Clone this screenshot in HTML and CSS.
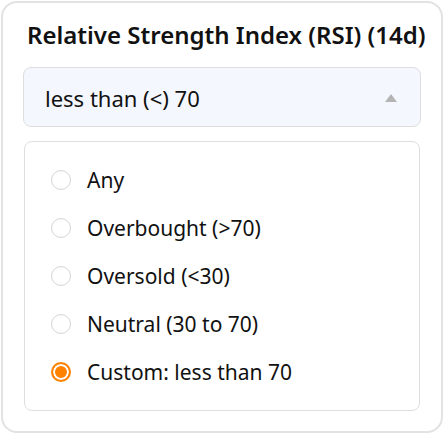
FILE: index.html
```html
<!DOCTYPE html>
<html>
<head>
<meta charset="utf-8">
<link rel="stylesheet" href="styles.css">
</head>
<body>
<div class="card">
  <div class="title">Relative Strength Index (RSI) (14d)</div>
  <div class="select">
    <span class="select-value">less than (&lt;) 70</span>
    <span class="caret"></span>
  </div>
  <div class="options">
    <div class="option"><span class="radio"></span><span class="label">Any</span></div>
    <div class="option"><span class="radio"></span><span class="label">Overbought (&gt;70)</span></div>
    <div class="option"><span class="radio"></span><span class="label">Oversold (&lt;30)</span></div>
    <div class="option"><span class="radio"></span><span class="label">Neutral (30 to 70)</span></div>
    <div class="option"><span class="radio checked"></span><span class="label">Custom: less than 70</span></div>
  </div>
</div>
</body>
</html>
```
FILE: styles.css
```css
html, body {
  margin: 0;
  padding: 0;
  background: #ffffff;
}
body {
  padding: 1px;
  font-family: "Noto Sans", "Open Sans", sans-serif;
  color: #111111;
}
.card {
  box-sizing: border-box;
  width: 442px;
  height: 432px;
  border: 2px solid #e2e2e2;
  border-radius: 16px;
  padding: 17px 20px 0 20px;
  display: flex;
  flex-direction: column;
}
.title {
  font-size: 24px;
  font-weight: 600;
  line-height: 30px;
  padding-left: 4px;
  margin-bottom: 17px;
  white-space: nowrap;
}
.select {
  box-sizing: border-box;
  height: 60px;
  background: #f4f7fd;
  border: 1px solid #dedede;
  border-radius: 8px;
  display: flex;
  align-items: center;
  justify-content: space-between;
  padding: 2px 23px 0 21px;
}
.select-value {
  font-size: 22px;
  line-height: 28px;
}
.caret {
  width: 0;
  height: 0;
  border-left: 6px solid transparent;
  border-right: 6px solid transparent;
  border-bottom: 8px solid #b4b4b4;
}
.options {
  box-sizing: border-box;
  margin: 14px 1px 0 1px;
  border: 1px solid #dedede;
  border-radius: 8px;
  padding: 14px 0 14px 26px;
  display: flex;
  flex-direction: column;
}
.option {
  height: 48px;
  display: flex;
  align-items: center;
  gap: 16px;
}
.radio {
  box-sizing: border-box;
  width: 20px;
  height: 20px;
  border-radius: 50%;
  border: 1.5px solid #d4d4d4;
  background: #ffffff;
  flex: none;
}
.radio.checked {
  border: 2px solid #ff8200;
  background: #ff8200;
  box-shadow: inset 0 0 0 2px #ffffff;
}
.label {
  font-size: 21px;
  line-height: 28px;
}
```
